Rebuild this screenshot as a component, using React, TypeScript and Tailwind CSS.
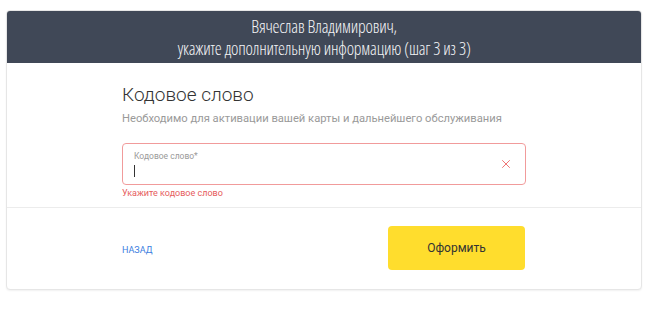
import { X } from "lucide-react";

export default function App() {
  return (
    <div className="min-h-[313px] bg-white px-[6px] pt-[10px] font-['Roboto',sans-serif]">
      <div className="w-[636px] overflow-hidden rounded-[4px] border border-[#e6e6e6] bg-white shadow-[0_1px_2px_rgba(0,0,0,0.06)]">
        <div className="flex h-[52px] flex-col items-center justify-center bg-[#404857] text-center font-['Open_Sans',sans-serif] text-[17.6px] font-light leading-[22px] tracking-[-0.2px] text-[#f3f4f6] [font-stretch:75%]">
          <span>Вячеслав Владимирович,</span>
          <span>укажите дополнительную информацию (шаг 3 из 3)</span>
        </div>

        <div className="h-[145px] border-b border-[#ececec] pl-[115px] pt-[20px]">
          <h2 className="text-[19px] font-light leading-[24px] text-[#333]">Кодовое слово</h2>
          <p className="mt-[5px] text-[11.2px] leading-[14px] text-[#9a9a9a]">
            Необходимо для активации вашей карты и дальнейшего обслуживания
          </p>
          <div className="mt-[17px] flex h-[42px] w-[404px] items-center justify-between rounded-[4px] border border-[#f19b9b] pl-[11px] pr-[12px]">
            <div className="flex flex-col">
              <span className="text-[8.5px] leading-[10px] text-[#9a9a9a]">Кодовое слово*</span>
              <span className="mt-[4px] h-[12px] w-px bg-[#333]" />
            </div>
            <X className="h-[14px] w-[14px] text-[#ef6b6b]" strokeWidth={1.6} />
          </div>
          <p className="mt-[2px] text-[9px] leading-[12px] text-[#e65c5c]">Укажите кодовое слово</p>
        </div>

        <div className="flex h-[81px] items-start pl-[115px] pt-[18px]">
          <a href="#" className="mt-[18px] w-[266px] text-[9px] uppercase text-[#3b7de0]">
            Назад
          </a>
          <button
            type="button"
            className="h-[44px] w-[137px] rounded-[4px] bg-[#ffdd2d] text-[12px] text-[#333]"
          >
            Оформить
          </button>
        </div>
      </div>
    </div>
  );
}
